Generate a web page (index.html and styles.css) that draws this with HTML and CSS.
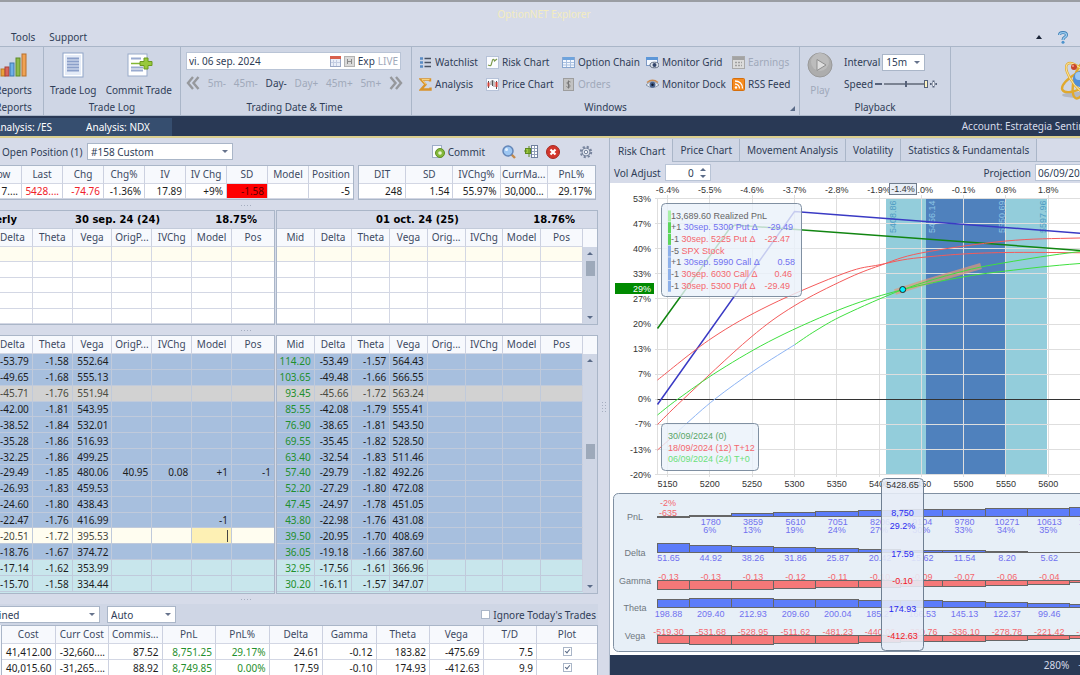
FILE: index.html
```html
<!DOCTYPE html>
<html lang="en">
<head>
    <meta charset="UTF-8">
    <meta name="viewport" content="width=device-width, initial-scale=1.0">
    <title>OptionNET Explorer</title>
    <link rel="stylesheet" href="styles.css">
</head>
<body>
    <header class="titlebar">
        <h1 class="app-title">OptionNET Explorer</h1>
        <nav class="menu">
            <a href="#tools">Tools</a>
            <a href="#support">Support</a>
            <span class="menu-right">
                <button type="button" class="icon-btn" aria-label="Collapse ribbon"><svg width="6" height="4"><path d="M0 4L3 0L6 4Z" fill="#1b2438"/></svg></button>
                <button type="button" class="icon-btn" aria-label="Help"><svg width="10" height="13" viewBox="0 0 10 13"><path d="M1.5 4C1.5 .8 8.5 .8 8.5 4C8.5 6.400 5 5.800 5 9" fill="none" stroke="#3f7fb5" stroke-width="3"/><path d="M1.500 4C1.500 .8 8.500 .8 8.500 4C8.500 6.400 5 5.800 5 9" fill="none" stroke="#9ccdf0" stroke-width="1.400"/><circle cx="5" cy="11.300" r="1.500" fill="#4d93cc"/></svg></button>
            </span>
        </nav>
    </header>

    <section class="ribbon">
        <div class="group group-reports">
            <div class="group-body">
                <button type="button" class="big-btn">
                    <svg width="28" height="28" viewBox="0 0 28 28"><rect x="1" y="18" width="4" height="7" fill="#e9a13b" stroke="#b87a20"/><rect x="5" y="16" width="4" height="9" fill="#d9655c" stroke="#a8433c"/><rect x="10" y="12" width="4" height="13" fill="#6fb0e6" stroke="#3f78ae"/><rect x="16" y="7" width="4" height="18" fill="#8dbb4a" stroke="#5e8a28"/><rect x="22" y="3" width="4" height="22" fill="#f0a254" stroke="#b9702a"/></svg>
                    Reports
                </button>
            </div>
            <div class="group-name">Reports</div>
        </div>

        <div class="group group-log">
            <div class="group-body">
                <button type="button" class="big-btn">
                    <svg width="28" height="28" viewBox="0 0 28 28"><rect x="4" y="2" width="20" height="24" fill="#fff" stroke="#8fa4c8"/><rect x="6" y="4" width="16" height="20" fill="#e4ebf7"/><path d="M8 7.500H20M8 10.500H20M8 13.500H20M8 16.500H20M8 19.500H20" stroke="#8b9fc9" stroke-width="2"/></svg>
                    Trade Log
                </button>
                <button type="button" class="big-btn">
                    <svg width="28" height="28" viewBox="0 0 28 28"><rect x="3" y="3" width="19" height="22" fill="#fff" stroke="#9aabca"/><path d="M6 7.500H16M6 16.500H18M6 19.500H18" stroke="#9aabd0" stroke-width="2"/><path d="M6 12.500H16" stroke="#83b735" stroke-width="1.500"/><path d="M19 7H23V10.500H27V14.500H23V18H19V14.500H15V10.500H19Z" fill="#98c93c" stroke="#6c9a20"/></svg>
                    Commit Trade
                </button>
            </div>
            <div class="group-name">Trade Log</div>
        </div>

        <div class="group group-date">
            <div class="group-body date-body">
                <div class="date-box">
                    <input type="text" aria-label="Trading date" value="vi. 06 sep. 2024">
                    <button type="button" class="icon-btn" aria-label="Calendar"><svg width="11" height="11"><rect x=".5" y=".5" width="10" height="10" fill="#e9eef8" stroke="#9aa8c6"/><rect width="11" height="3" fill="#d8604c"/><path d="M3.500 4V10M6.500 4V10M1 6.500H10" stroke="#c3cde2"/></svg></button>
                    <button type="button" class="icon-btn" aria-label="Step"><svg width="11" height="11"><rect x=".5" y=".5" width="10" height="10" fill="#d9d9d9" stroke="#b3b3b3"/><path d="M3.500 3V8M7.500 3V8M3.500 5.500H7.500" stroke="#8a8a8a"/></svg></button>
                    <button type="button" class="icon-btn">Exp</button>
                    <button type="button" class="icon-btn" disabled>LIVE</button>
                </div>
                <div class="steps">
                    <button type="button" class="icon-btn" aria-label="Back"><svg width="14" height="14"><path d="M7 1L2 7L7 13M12.500 1L7.500 7L12.500 13" fill="none" stroke="#96989c" stroke-width="2.400"/></svg></button>
                    <button type="button" class="icon-btn" disabled>5m-</button>
                    <button type="button" class="icon-btn" disabled>45m-</button>
                    <button type="button" class="icon-btn">Day-</button>
                    <button type="button" class="icon-btn" disabled>Day+</button>
                    <button type="button" class="icon-btn" disabled>45m+</button>
                    <button type="button" class="icon-btn" disabled>5m+</button>
                    <button type="button" class="icon-btn" aria-label="Forward"><svg width="14" height="14"><path d="M1.500 1L6.500 7L1.500 13M7 1L12 7L7 13" fill="none" stroke="#96989c" stroke-width="2.400"/></svg></button>
                </div>
            </div>
            <div class="group-name">Trading Date &amp; Time</div>
        </div>

        <div class="group group-windows">
            <div class="group-body windows">
                <button type="button" class="tool"><svg width="13" height="13"><path d="M1 2.500H4M1 6.500H4M1 10.500H4" stroke="#5b8cc4" stroke-width="2.400"/><path d="M5.500 2.500H12M5.500 6.500H12M5.500 10.500H12" stroke="#4a5364" stroke-width="1.300"/></svg>Watchlist</button>
                <button type="button" class="tool"><svg width="13" height="13"><rect x=".5" y=".5" width="12" height="12" fill="#fbfcff" stroke="#b6c2d8"/><path d="M2 9C6 11 5 8 6 6C6.500 2.500 8 3 8.500 5L11 3" fill="none" stroke="#7c9a4c" stroke-width="1.200"/></svg>Risk Chart</button>
                <button type="button" class="tool"><svg width="13" height="13"><rect x=".5" y="1.500" width="12" height="10" fill="#f4f8ff" stroke="#89a7d0"/><rect x="1" y="1" width="11" height="3" fill="#6fa4dd"/><path d="M4.500 4V11M8.500 4V11M1 6.500H12M1 9H12" stroke="#a9c0e0"/></svg>Option Chain</button>
                <button type="button" class="tool"><svg width="13" height="13"><rect x=".5" y="1.500" width="11" height="8" fill="#f4f8ff" stroke="#7d99c4"/><rect x="0" y="1" width="12" height="3" fill="#5d97d8"/><ellipse cx="8.500" cy="9" rx="4.500" ry="2.800" fill="#dfe5ee" stroke="#5f6b80"/><circle cx="8.500" cy="9" r="2" fill="#34466b"/></svg>Monitor Grid</button>
                <button type="button" class="tool" disabled><svg width="13" height="13"><rect x=".5" y=".5" width="12" height="12" fill="#dcdcdc" stroke="#a9a9a9"/><rect x="1" y="1" width="11" height="3" fill="#a3a3a3"/><path d="M3 6.500H10M3 9.500H10" stroke="#a0a0a0" stroke-width="1.500" stroke-dasharray="2 1"/></svg>Earnings</button>
                <button type="button" class="tool"><svg width="13" height="13"><path d="M11 3.500V1.500H2L6.500 6.500L2 11.500H11.500V9.500" fill="none" stroke="#d9932b" stroke-width="2.400"/><path d="M10.500 1.500H3L7 6.500" fill="none" stroke="#f7d17a" stroke-width="1"/></svg>Analysis</button>
                <button type="button" class="tool"><svg width="13" height="13"><rect x=".5" y=".5" width="12" height="12" fill="#fbfcff" stroke="#b6c2d8"/><path d="M2.500 3V10M6.500 2V8M10.500 3V11" stroke="#555"/><path d="M2.500 4.500V8.500M10.500 4V9" stroke="#d13c34" stroke-width="2"/><path d="M5 7V4C5 2 8 2 8 4V9" fill="none" stroke="#888"/></svg>Price Chart</button>
                <button type="button" class="tool" disabled><svg width="13" height="13"><rect x="1.500" y=".5" width="10" height="12" fill="#c2c2c2" stroke="#9d9d9d"/><path d="M8.500 4C6 2.500 4.500 4.500 5.500 6C6.500 6.800 8.500 6.500 8 8.500C7 10 5.500 9.500 4.500 8.500M6.500 2.500V10.500" fill="none" stroke="#777"/></svg>Orders</button>
                <button type="button" class="tool"><svg width="13" height="13"><path d="M0 7Q6.500 0 13 7Q6.500 12 0 7Z" fill="#edf1f7" stroke="#8a97ab"/><path d="M1 4.500Q6.500 0 12 4.500" fill="none" stroke="#c98b52" stroke-width="1.500"/><circle cx="6.500" cy="6.800" r="3" fill="#4a6490"/><circle cx="6.500" cy="6.800" r="1.200" fill="#10182b"/></svg>Monitor Dock</button>
                <button type="button" class="tool"><svg width="13" height="13"><rect x=".5" y=".5" width="12" height="12" rx="1" fill="#f58a1f" stroke="#d56f0c"/><circle cx="4" cy="9.500" r="1.200" fill="#fff"/><path d="M3 6C5.500 6 7.500 8 7.500 10.500M3 3C7.500 3 10.500 6 10.500 10.500" fill="none" stroke="#fff" stroke-width="1.300"/></svg>RSS Feed</button>
            </div>
            <div class="group-name">Windows</div>
            <svg class="launcher" width="5" height="5"><path d="M5 0V5H0Z" fill="#5a6b88"/></svg>
        </div>

        <div class="group group-playback">
            <div class="group-body playback">
                <button type="button" class="big-btn" disabled>
                    <svg width="28" height="28" viewBox="0 0 28 28"><circle cx="14" cy="14" r="12" fill="#adadad" stroke="#999"/><circle cx="14" cy="11" r="9" fill="#bcbcbc"/><path d="M11 8.500L20 14L11 19.500Z" fill="#dedede" stroke="#8f8f8f"/></svg>
                    Play
                </button>
                <div class="play-options">
                    <div class="play-row">
                        <label for="interval">Interval</label>
                        <span class="select select-interval"><select id="interval"><option>15m</option></select></span>
                    </div>
                    <div class="play-row">
                        <label for="speed">Speed</label>
                        <svg width="7" height="8"><path d="M0 4H7" stroke="#56627a" stroke-width="2"/></svg>
                        <input type="range" id="speed" min="0" max="10" value="10">
                        <svg width="7" height="8"><path d="M3.500 .5V7.500M0 4H7" stroke="#56627a" stroke-width="2"/><path d="M3.500 2V6M1.500 4H5.500" stroke="#eef1f7"/></svg>
                    </div>
                </div>
            </div>
            <div class="group-name">Playback</div>
        </div>

        <svg class="logo" width="46" height="46" viewBox="0 0 46 46">
            <ellipse cx="20" cy="38" rx="17" ry="3" fill="#b3b8c4"/>
            <g fill="none" stroke="#e0a92e" stroke-width="2.400">
                <ellipse cx="22" cy="23" rx="21" ry="8" transform="rotate(-28 22 23)"/>
                <ellipse cx="22" cy="23" rx="21" ry="8" transform="rotate(50 22 23)"/>
                <ellipse cx="22" cy="23" rx="19" ry="7" transform="rotate(105 22 23)"/>
            </g>
            <ellipse cx="22" cy="23" rx="21" ry="8" transform="rotate(50 22 23)" fill="none" stroke="#fbe49a"/>
            <circle cx="22" cy="22" r="8" fill="#4f8fd9"/>
            <circle cx="20" cy="19" r="4" fill="#9cc8f5"/>
            <circle cx="15" cy="10" r="3" fill="#c9442b"/>
            <circle cx="14" cy="9" r="1" fill="#f0a08c"/>
        </svg>
    </section>

    <div class="docbar">
        <nav class="doc-tabs">
            <a href="#es">Analysis: /ES</a>
            <a href="#ndx">Analysis: NDX</a>
        </nav>
        <span class="account">Account: Estrategia Sentiment</span>
    </div>

    <main class="workspace">
        <section class="left">
            <div class="position-bar">
                <label for="position">Open Position (1)</label>
                <span class="select select-position"><select id="position"><option>#158 Custom</option></select></span>
                <div class="position-tools">
                    <button type="button" class="tool"><svg width="13" height="13"><rect x=".5" y=".5" width="9" height="12" fill="#fbfcff" stroke="#9fadc8"/><circle cx="8" cy="8" r="4.500" fill="#84b83c" stroke="#5f8f22"/><circle cx="8" cy="8" r="1.800" fill="#e8f4d2"/></svg>Commit</button>
                    <button type="button" class="icon-btn" aria-label="Search"><svg width="14" height="14"><path d="M8.500 8.500L13 13" stroke="#c48a4a" stroke-width="2.400"/><circle cx="6" cy="6" r="5" fill="#9cc6f2" stroke="#6486b8" stroke-width="1.500"/><circle cx="4.500" cy="4.500" r="1.500" fill="#e4f1ff"/></svg></button>
                    <button type="button" class="icon-btn" aria-label="Columns"><svg width="14" height="14"><rect x="7.500" y=".5" width="6" height="12" fill="#fff" stroke="#6f7f9e"/><path d="M8 3.500H13M8 6.500H13M8 9.500H13M10.500 1V12" stroke="#93a1bb"/><rect x="1.500" y="3.500" width="5" height="5" fill="#9cc83e" stroke="#5f8a20"/><path d="M0 6H3M5 1V12" stroke="#5f8a20"/></svg></button>
                    <button type="button" class="icon-btn" aria-label="Close position"><svg width="14" height="14"><circle cx="7" cy="7" r="6.500" fill="#d2362c" stroke="#a82a22"/><path d="M4.500 4.500L9.500 9.500M9.500 4.500L4.500 9.500" stroke="#fff" stroke-width="2.200"/></svg></button>
                    <button type="button" class="icon-btn gear" aria-label="Settings"><svg width="14" height="14"><circle cx="7" cy="7" r="5.200" fill="none" stroke="#77849d" stroke-width="2" stroke-dasharray="2.100 2"/><circle cx="7" cy="7" r="4" fill="#dde2ec" stroke="#77849d"/><circle cx="7" cy="7" r="1.700" fill="#f4f6fa" stroke="#77849d"/></svg></button>
                </div>
            </div>

            <div class="quotes">
                <table class="grid quote-under">
                    <thead><tr><th>Low</th><th>Last</th><th>Chg</th><th>Chg%</th><th>IV</th><th>IV Chg</th><th>SD</th><th>Model</th><th class="wide">Position</th></tr></thead>
                    <tbody><tr><td>5417....</td><td class="red">5428....</td><td class="red">-74.76</td><td>-1.36%</td><td>17.89</td><td>+9%</td><td class="alert">-1.58</td><td></td><td>-5</td></tr></tbody>
                </table>
                <table class="grid quote-pos">
                    <thead><tr><th>DIT</th><th>SD</th><th>IVChg%</th><th>CurrMa...</th><th>PnL%</th></tr></thead>
                    <tbody><tr><td>248</td><td>1.54</td><td>55.97%</td><td>30,000...</td><td>29.17%</td></tr></tbody>
                </table>
            </div>
            <div class="grip"></div>

            <div class="chain chain-calls">
                <div class="pane">
                    <div class="expiry near-title"><b>Quarterly</b><b>30 sep. 24 (24)</b><b>18.75%</b></div>
                    <div class="pane-body"><table class="grid near" id="callsNear"></table></div>
                </div>
                <div class="pane">
                    <div class="expiry far-title"><b>01 oct. 24 (25)</b><b>18.76%</b></div>
                    <div class="pane-body">
                        <table class="grid far" id="callsFar"></table>
                        <div class="scroll"><i class="up"></i><i class="thumb"></i><i class="down"></i></div>
                    </div>
                </div>
            </div>
            <div class="grip"></div>

            <div class="chain chain-puts">
                <div class="pane">
                    <div class="pane-body"><table class="grid near" id="putsNear"></table></div>
                </div>
                <div class="pane">
                    <div class="pane-body">
                        <table class="grid far" id="putsFar"></table>
                        <div class="scroll"><i class="up"></i><i class="thumb"></i><i class="down"></i></div>
                    </div>
                </div>
            </div>
            <div class="grip"></div>

            <div class="summary-bar">
                <span class="select select-view"><select aria-label="View"><option>Combined</option></select></span>
                <span class="select select-auto"><select aria-label="Mode"><option>Auto</option></select></span>
                <label class="ignore"><input type="checkbox">Ignore Today's Trades</label>
            </div>
            <div class="summary-wrap">
                <table class="grid summary">
                    <thead><tr><th>Cost</th><th>Curr Cost</th><th>Commis...</th><th>PnL</th><th>PnL%</th><th>Delta</th><th>Gamma</th><th>Theta</th><th>Vega</th><th>T/D</th><th class="plot">Plot</th></tr></thead>
                    <tbody>
                        <tr><td>41,412.00</td><td>-32,660....</td><td>87.52</td><td class="green">8,751.25</td><td class="green">29.17%</td><td>24.61</td><td>-0.12</td><td>183.82</td><td>-475.69</td><td>7.5</td><td class="tick"><input type="checkbox" aria-label="Plot row 1" checked></td></tr>
                        <tr><td>40,015.60</td><td>-31,265....</td><td>88.92</td><td class="green">8,749.85</td><td class="green">0.00%</td><td>17.59</td><td>-0.10</td><td>174.93</td><td>-412.63</td><td>9.9</td><td class="tick"><input type="checkbox" aria-label="Plot row 2" checked></td></tr>
                    </tbody>
                </table>
            </div>
            <div class="grip grip-side"></div>
        </section>

        <section class="right">
            <nav class="tabs">
                <button type="button" class="tab active">Risk Chart</button>
                <button type="button" class="tab">Price Chart</button>
                <button type="button" class="tab">Movement Analysis</button>
                <button type="button" class="tab">Volatility</button>
                <button type="button" class="tab">Statistics &amp; Fundamentals</button>
            </nav>
            <div class="chart-bar">
                <label for="vol">Vol Adjust</label>
                <span class="spin"><input type="text" id="vol" value="0"><i class="up"></i><i class="down"></i></span>
                <label for="projection" class="projection-label">Projection</label>
                <input type="text" id="projection" class="projection" value="06/09/2024">
            </div>
            <div class="chart-area"><svg id="chart" class="chart" role="img" aria-label="Risk chart"></svg></div>
            <footer class="status"><span>280%</span><span>−</span></footer>
        </section>
    </main>

    <script>
        // ---- option chain tables ----
        const nearHeads = ['Delta', 'Theta', 'Vega', 'OrigP...', 'IVChg', 'Model', 'Pos'];
        const farHeads = ['Mid', 'Delta', 'Theta', 'Vega', 'Orig...', 'IVChg', 'Model', 'Pos'];

        const near = [
            ['-53.79', '-1.58', '552.64'], ['-49.65', '-1.68', '555.13'], ['-45.71', '-1.76', '551.94'],
            ['-42.00', '-1.81', '543.95'], ['-38.52', '-1.84', '532.01'], ['-35.28', '-1.86', '516.93'],
            ['-32.25', '-1.86', '499.25'], ['-29.49', '-1.85', '480.06', '40.95', '0.08', '+1', '-1'],
            ['-26.93', '-1.83', '459.53'], ['-24.60', '-1.80', '438.43'], ['-22.47', '-1.76', '416.99', '', '', '-1'],
            ['-20.51', '-1.72', '395.53'], ['-18.76', '-1.67', '374.72'], ['-17.14', '-1.62', '353.99'],
            ['-15.70', '-1.58', '334.44']
        ];
        const far = [
            ['114.20', '-53.49', '-1.57', '564.43'], ['103.65', '-49.48', '-1.66', '566.55'], ['93.45', '-45.66', '-1.72', '563.24'],
            ['85.55', '-42.08', '-1.79', '555.41'], ['76.90', '-38.65', '-1.81', '543.50'], ['69.55', '-35.45', '-1.82', '528.50'],
            ['63.40', '-32.54', '-1.83', '511.46'], ['57.40', '-29.79', '-1.82', '492.26'], ['52.20', '-27.29', '-1.80', '472.08'],
            ['47.45', '-24.97', '-1.78', '451.05'], ['43.80', '-22.98', '-1.76', '431.08'], ['39.50', '-20.95', '-1.70', '408.69'],
            ['36.05', '-19.18', '-1.66', '387.60'], ['32.95', '-17.56', '-1.61', '366.96'], ['30.20', '-16.11', '-1.57', '347.07']
        ];

        function fillTable(id, heads, rows, rowClass) {
            const head = heads.map(h => `<th>${h}</th>`).join('');
            const body = rows.map((row, r) => {
                const cells = heads.map((h, c) => `<td>${row[c] || ''}</td>`).join('');
                return `<tr class="${rowClass(r)}">${cells}</tr>`;
            }).join('');
            document.getElementById(id).innerHTML = `<thead><tr>${head}</tr></thead><tbody>${body}</tbody>`;
        }

        function putClass(editRow) {
            return r => {
                if (r === 2) return 'muted';
                if (r === editRow) return 'edit';
                return r > 12 ? 'outer' : 'inner';
            };
        }

        const blank = [[], [], [], [], []];
        const callClass = r => r === 0 ? 'first' : '';
        fillTable('callsNear', nearHeads, blank, callClass);
        fillTable('callsFar', farHeads, blank, callClass);
        fillTable('putsNear', nearHeads, near, putClass(11));
        fillTable('putsFar', farHeads, far, putClass(-1));

        // ---- risk chart ----
        const STEP = 42.3;
        const X0 = 57.5;          // x of the 5150 grid line
        const LEFT = 47.5;
        const TOP = 15.5;
        const ROW = 25.1;
        const RIGHT = 560;
        const out = [];

        function line(x1, y1, x2, y2, cls) {
            out.push(`<line x1="${x1}" y1="${y1}" x2="${x2}" y2="${y2}" class="${cls}"/>`);
        }
        function rect(x, y, w, h, cls, rx = 0) {
            out.push(`<rect x="${x}" y="${y}" width="${w}" height="${h}" rx="${rx}" class="${cls}"/>`);
        }
        function text(x, y, str, cls) {
            out.push(`<text x="${x}" y="${y + 3}" class="${cls}">${str}</text>`);
        }
        // smooth curve through a list of points
        function curve(pts, cls) {
            let d = `M${pts[0]}`;
            for (let i = 0; i < pts.length - 1; i++) {
                const a = pts[i - 1] || pts[i], b = pts[i], c = pts[i + 1], e = pts[i + 2] || c;
                d += `C${b[0] + (c[0] - a[0]) / 6},${b[1] + (c[1] - a[1]) / 6} ${c[0] - (e[0] - b[0]) / 6},${c[1] - (e[1] - b[1]) / 6} ${c}`;
            }
            out.push(`<path d="${d}" class="curve ${cls}"/>`);
        }

        // deviation bands
        rect(276, 15, 40, 276, 'band-outer');
        rect(316, 15, 80, 276, 'band-inner');
        rect(396, 15, 41, 276, 'band-outer');

        // grid and axis labels
        const moves = ['-6.4%', '-5.5%', '-4.6%', '-3.7%', '-2.8%', '-1.9%', '-1.0%', '-0.1%', '0.8%', '1.8%'];
        moves.forEach((m, i) => {
            const x = X0 + i * STEP;
            line(x, 12, x, 294, 'grid-line');
            text(x, 7, m, 'axis mid');
            text(x, 301, 5150 + i * 50, 'axis mid');
        });
        ['53%', '47%', '40%', '33%', '27%', '20%', '13%', '7%', '0%', '-7%', '-13%', '-20%'].forEach((p, i) => {
            const y = TOP + i * ROW;
            line(45, y, RIGHT, y, 'grid-line');
            text(41, y, p, 'axis end');
        });
        line(LEFT, TOP, LEFT, 291, 'grid-line');
        line(LEFT, 216.5, RIGHT, 216.5, 'zero');

        [[286, '5408.86', 'on-outer'], [325, '5456.14', 'on-inner'], [395, '5550.69', 'on-inner'], [436, '5597.96', 'on-outer']].forEach(b => {
            out.push(`<text transform="translate(${b[0]} 50) rotate(-90)" class="${b[2]}">${b[1]}</text>`);
        });

        // expected path, then the payoff lines
        out.push('<path d="M285 109L316 99L371 83" class="expected"/>');
        out.push('<path d="M47.5 221.500L184.500 28.500L230 32L560 57" class="curve navy"/>');
        out.push('<path d="M47.500 145.500L120 45L125 42L560 74" class="curve forest"/>');
        curve([[47.5, 197], [102, 155], [160, 122], [235, 90], [270, 81.7], [311, 74.5], [396, 69.5], [560, 71]], 'red');
        curve([[47.5, 241.5], [73, 216.5], [140, 155], [184, 123], [235, 96.5], [270, 82.5], [311, 70], [396, 58], [470, 55], [560, 54]], 'red');
        curve([[47.5, 232], [68, 216], [110, 187], [166, 155], [235, 124.5], [293, 106.5], [350, 94.5], [396, 88], [470, 80.5], [560, 76]], 'lime');
        curve([[47.5, 267], [60, 256]], 'red');
        curve([[60, 256], [76, 241], [105, 216], [145, 187], [185, 161.5]], 'sky');
        curve([[185, 161.5], [206, 147.5], [235, 131.5], [293, 106.5], [350, 89], [396, 79.5], [470, 68.5], [560, 60]], 'lime');
        out.push('<circle cx="292.700" cy="106.500" r="3" class="marker"/>');

        rect(279.5, .5, 27, 11, 'move-box');
        text(293, 6, '-1.4%', 'axis mid');
        rect(5, 100, 39, 11, 'level-box');
        text(41, 106, '29%', 'level end');

        // position legend
        rect(51.5, 20.5, 140, 93, 'panel', 4);
        [
            ['p1', '13,689.60 Realized PnL', '', '', '', 0],
            ['p2', '+1', '30sep. 5300 Put Δ', '-29.49', 'blue', 183],
            ['p2', '-1', '30sep. 5225 Put Δ', '-22.47', 'pink', 180],
            ['p3', '-5', 'SPX Stock', '', 'pink', 180],
            ['p3', '+1', '30sep. 5990 Call Δ', '0.58', 'blue', 185],
            ['p3', '-1', '30sep. 6030 Call Δ', '0.46', 'pink', 182],
            ['p3', '-1', '30sep. 5300 Put Δ', '-29.49', 'pink', 180]
        ].forEach((l, i) => {
            const y = 32.5 + i * 11.7;
            rect(58, y - 5, 3, 11, l[0]);
            out.push(`<text x="61" y="${y + 3}" class="grey">${l[1]} <tspan class="${l[4]}">${l[2]}</tspan></text>`);
            if (l[3]) text(l[5], y, l[3], l[4] + ' end');
        });

        // date legend
        rect(51.5, 240.5, 97, 47, 'panel', 4);
        text(58, 253, '30/09/2024 (0)', 'leg-forest');
        text(58, 264.5, '18/09/2024 (12) T+12', 'pink');
        text(58, 276, '06/09/2024 (24) T+0', 'leg-lime');

        // greeks strip
        rect(3.5, 310.5, 600, 158, 'greeks', 5);
        const strips = [
            { name: 'PnL', base: 333.5, labelY: 338.5, cls: 'blue', bar: 'bar-blue', h: [-0.5, 1, 3, 4, 5, 6, 7, 7, 8, 8, 9],
              vals: ['', '1780', '3859', '5610', '7051', '8206', '9104', '9780', '10271', '10613', '10845'] },
            { name: 'Delta', base: 369.5, labelY: 375, cls: 'blue', bar: 'bar-blue', h: [9, 7, 6, 5, 4, 3, 2, 2, 1, .5, .5],
              vals: ['51.65', '44.92', '38.26', '31.86', '25.87', '20.42', '15.62', '11.54', '8.20', '5.62', '3.71'] },
            { name: 'Gamma', base: 397.5, labelY: 393.5, cls: 'pink', bar: 'bar-red', h: [-9, -9, -9, -8, -7, -7, -6, -6, -5, -4, -2],
              vals: ['-0.13', '-0.13', '-0.13', '-0.12', '-0.11', '-0.10', '-0.09', '-0.07', '-0.06', '-0.04', '-0.03'] },
            { name: 'Theta', base: 424.5, labelY: 430.5, cls: 'blue', bar: 'bar-blue', h: [8, 9, 9, 8, 8, 7, 7, 6, 5, 4, 3],
              vals: ['198.88', '209.40', '212.93', '209.60', '200.04', '185.27', '166.53', '145.13', '122.37', '99.46', '77.60'] },
            { name: 'Vega', base: 452.5, labelY: 449, cls: 'pink', bar: 'bar-red', h: [-8, -9, -9, -8, -8, -7, -6, -6, -5, -4, -3],
              vals: ['-519.30', '-531.68', '-528.95', '-511.62', '-481.23', '-440.06', '-390.76', '-336.10', '-278.78', '-221.42', '-168.10'] }
        ];
        strips.forEach(s => {
            text(25, s.base + .5, s.name, 'strip-name mid');
            s.h.forEach((h, i) => {
                const x = i ? 79 + (i - 1) * STEP : LEFT;
                const w = i ? STEP : 31.5;
                rect(x, h > 0 ? s.base - h : s.base, w, Math.abs(h), s.bar);
                text(58.5 + i * STEP, s.labelY, s.vals[i], s.cls + ' mid');
            });
        });
        ['6%', '13%', '19%', '24%', '27%', '30%', '33%', '34%', '35%', '36%'].forEach((p, i) => {
            text(X0 + (i + 1) * STEP, 347, p, 'blue mid');
        });
        text(58, 320, '-2%', 'pink mid');
        text(58, 330, '-635', 'pink mid');

        // values at the current price
        rect(271.5, 295.5, 42, 172, 'cursor', 4);
        text(292.5, 302, '5428.65', 'axis mid');
        [[330, '8,750'], [343, '29.2%'], [370.5, '17.59'], [398, '-0.10'], [425.5, '174.93'], [453, '-412.63']].forEach(v => {
            text(292.5, v[0], v[1], (v[1][0] === '-' ? 'now-red' : 'now-blue') + ' mid');
        });

        document.getElementById('chart').innerHTML = out.join('');
    </script>
</body>
</html>
```

FILE: styles.css
```css
* {
    margin: 0;
    padding: 0;
    box-sizing: border-box;
}

body {
    display: flex;
    flex-direction: column;
    height: 100vh;
    overflow: hidden;
    background-color: #d6dbe9;
    color: #2f3d57;
    font-family: "Noto Sans", "Open Sans", sans-serif;
    font-size: 10px;
    line-height: 14px;
    white-space: nowrap;
}

button, input, select {
    font: inherit;
    color: inherit;
    border: none;
    background: none;
}

a {
    color: inherit;
    text-decoration: none;
}

svg {
    display: block;
    flex: none;
}

button:disabled {
    color: #a0a9ba;
}

.icon-btn {
    display: flex;
    align-items: center;
}

/* title bar and menu */
.titlebar {
    border-top: 2px solid #9a9da3;
    padding-top: 5px;
}

.app-title {
    padding-left: 8px;
    text-align: center;
    font-size: 10px;
    font-weight: normal;
    line-height: 14px;
    color: #f3ecc0;
}

.menu {
    display: flex;
    gap: 14px;
    padding: 9px 12px 2px 11px;
}

.menu-right {
    display: flex;
    gap: 16px;
    margin-left: auto;
}

/* ribbon */
.ribbon {
    display: flex;
    height: 70px;
    flex: none;
    background-color: #cfd6e5;
    border-top: 1px solid #aab6c8;
    border-bottom: 1px solid #aab6c8;
}

.group {
    position: relative;
    display: flex;
    flex-direction: column;
    padding-top: 4px;
    border-right: 1px solid #aab6c8;
}

.group-body {
    display: flex;
    flex: 1;
}

.group-name {
    text-align: center;
    padding-bottom: 1px;
}

.group-reports {
    width: 60px;
    margin-left: -16px;
}

.group-reports .group-body {
    justify-content: center;
}

.group-log {
    width: 137px;
}

.group-log .group-body {
    justify-content: space-between;
    padding: 0 8px 0 6px;
}

.big-btn {
    display: flex;
    flex-direction: column;
    align-items: center;
    gap: 4px;
}

.group-date {
    width: 231px;
    padding-left: 5px;
    padding-right: 8px;
}

.date-body {
    flex-direction: column;
    gap: 6px;
    padding-top: 1px;
}

.date-box {
    display: flex;
    align-items: center;
    gap: 3px;
    height: 18px;
    margin-right: 2px;
    padding: 0 2px;
    background-color: #fff;
    border: 1px solid #b9c4d6;
}

.date-box input {
    flex: 1;
    min-width: 0;
}

.steps {
    display: flex;
    justify-content: space-between;
    align-items: center;
}

.windows {
    display: grid;
    grid-template-columns: 67px 76px 84px 86px 65px;
    grid-template-rows: 22px 22px;
    padding-left: 7px;
}

.group-windows {
    width: 388px;
}

.tool {
    display: flex;
    align-items: center;
    gap: 3px;
}

.launcher {
    position: absolute;
    right: 4px;
    bottom: 4px;
}

.group-playback {
    width: 151px;
}

.playback {
    gap: 10px;
    padding-left: 6px;
}

.play-row {
    display: flex;
    align-items: center;
    gap: 2px;
    height: 22px;
}

.play-row label {
    min-width: 29px;
}

.play-row input[type="range"] {
    appearance: none;
    width: 44px;
    height: 8px;
    background:
        linear-gradient(#56627a, #56627a) center / 2px 6px no-repeat,
        linear-gradient(#7b8392, #7b8392) center / 100% 2px no-repeat;
}

.play-row input[type="range"]::-webkit-slider-thumb {
    appearance: none;
    width: 4px;
    height: 8px;
    background-color: #fdf3c0;
    border: 1px solid #56627a;
}

.logo {
    margin: 10px -25px 0 auto;
}

/* drop-downs */
.select {
    position: relative;
    display: flex;
    align-items: center;
    height: 17px;
    background-color: #fff;
    border: 1px solid #aab6c8;
}

.select select {
    appearance: none;
    width: 100%;
    padding-left: 3px;
}

.select::after {
    content: "";
    position: absolute;
    right: 4px;
    border: 3px solid transparent;
    border-top-color: #66738c;
    border-bottom: none;
}

.select-interval {
    width: 43px;
}

.select-position {
    width: 146px;
}

.select-view {
    width: 131px;
    margin-left: -31px;
}

.select-view select {
    padding-left: 1px;
}

.select-auto {
    width: 69px;
}

/* document tabs */
.docbar {
    display: flex;
    justify-content: space-between;
    height: 22px;
    flex: none;
    background-color: #293955;
    border-bottom: 2px solid #dccf8e;
    color: #d6dbe9;
}

.doc-tabs {
    display: flex;
    gap: 34px;
    width: 172px;
    margin-top: 2px;
    background-color: #364e6f;
    line-height: 18px;
    color: #fff;
}

.doc-tabs a:first-child {
    margin-left: -6px;
}

.account {
    margin-right: -23px;
    line-height: 20px;
}

/* workspace */
.workspace {
    display: grid;
    grid-template-columns: 609fr 471fr;
    flex: 1;
    min-height: 0;
}

.left {
    position: relative;
    min-width: 0;
    padding-right: 11px;
    overflow: hidden;
}

.position-bar {
    display: flex;
    align-items: center;
    gap: 7px;
    height: 27px;
    padding: 0 5px 0 2px;
}

.position-bar > label {
    width: 78px;
}

.position-tools {
    display: flex;
    gap: 8px;
    margin-left: auto;
}

.position-tools .tool {
    margin-right: 9px;
}

.gear {
    margin-left: 11px;
}

/* data grids */
.grid {
    width: 100%;
    table-layout: fixed;
    border-collapse: separate;
    border-spacing: 0;
    color: #1c1c1c;
}

.grid th,
.grid td {
    overflow: hidden;
    border-right: 1px solid #ccd1e0;
    border-bottom: 1px solid #d3d7e4;
    line-height: 12px;
}

.grid th {
    height: 18px;
    padding-bottom: 2px;
    background-color: #f7f9fd;
    font-weight: normal;
    text-align: center;
    color: #3d4a63;
}

.grid td {
    padding-right: 3px;
    background-color: #fff;
    text-align: right;
}

.grid th:last-child,
.grid td:last-child {
    border-right: none;
}

.chain .grid th:last-child {
    width: 42px;
}

.grid .red {
    color: #f0202a;
}

.grid .green {
    color: #1f8f2d;
}

.grid .alert {
    background-color: #f00;
    color: #5e0000;
}

.quotes {
    display: grid;
    grid-template-columns: 374fr 238fr;
    gap: 4px;
    height: 35px;
    margin-left: -20px;
    padding-right: 2px;
}

.quote-under,
.quote-pos {
    height: 35px;
    border: 1px solid #aab6c8;
}

.grid .wide {
    width: 44px;
}

.grip {
    height: 10px;
    background: radial-gradient(circle, #a5aec0 1px, transparent 1px) 240px 4px / 3px 3px no-repeat;
    background-repeat: repeat;
    background-clip: content-box;
    padding: 3px 345px 3px 240px;
}

.grip-side {
    position: absolute;
    right: 2px;
    top: 262px;
    width: 6px;
    height: 14px;
    padding: 1px;
}

.chain {
    display: grid;
    grid-template-columns: 283fr 322fr;
    gap: 1px;
    margin-left: -8px;
}

.pane {
    display: flex;
    flex-direction: column;
    min-width: 0;
    border: 1px solid #aab6c8;
}

.chain-calls .pane {
    height: 115px;
}

.chain-puts .pane {
    height: 259px;
    background-color: #c8e6ec;
}

.pane-body {
    display: flex;
    flex: 1;
}

.chain-calls .grid {
    height: 95px;
}

.chain-puts .grid {
    height: 256px;
}

.chain .grid td {
    border-color: #c0cadb;
}

.expiry {
    display: grid;
    height: 18px;
    background-color: #d6dbe9;
    border-bottom: 1px solid #c3cbda;
    font-family: "DejaVu Sans", Verdana, sans-serif;
    line-height: 18px;
    color: #000;
}

.near-title {
    grid-template-columns: 17px 1fr 1fr;
    padding-left: 7px;
}

.near-title b:first-child {
    justify-self: end;
}

.near-title b:nth-child(2) {
    padding-left: 58px;
}

.expiry b:last-child {
    padding-right: 17px;
    text-align: right;
}

.far-title {
    grid-template-columns: 1fr 1fr;
    padding-left: 99px;
}

.far-title b:last-child {
    padding-right: 22px;
}

.chain-calls .grid td {
    border-color: #d3d7e4;
}

.grid .first td {
    background-color: #fffdf0;
}

.grid .inner td {
    background-color: #a7bfde;
}

.grid .outer td {
    background-color: #c8e6ec;
}

.grid .muted td {
    background-color: #d2d2d2;
    color: #4a4a40;
}

.grid .edit td {
    background-color: #fffdf0;
    color: #4a4a40;
}

.grid .edit td:nth-child(6) {
    background: linear-gradient(#444, #444) right 3px center / 1px 12px no-repeat, #fdf0b4;
}

.grid.far tbody td:first-child {
    color: #1f8f2d;
}

.chain .far tr > :last-child {
    border-right: 1px solid #ccd1e0;
}

.scroll {
    display: flex;
    flex-direction: column;
    align-items: center;
    width: 14px;
    flex: none;
    border-top: 18px solid #f7f9fd;
    padding: 5px 0;
    background-color: #cfd6e5;
}

.up, .down {
    border: 3px solid transparent;
}

.up {
    border-bottom-color: #5a6b88;
    border-top: none;
}

.down {
    margin-top: auto;
    border-top-color: #5a6b88;
    border-bottom: none;
}

.thumb {
    width: 9px;
    height: 15px;
    margin-top: 6px;
    background-color: #9da9ba;
}

.chain-puts .thumb {
    margin-top: 82px;
}

/* position summary */
.summary-bar {
    display: flex;
    align-items: center;
    gap: 7px;
    height: 21px;
    background-color: #cfd6e5;
}

.ignore {
    display: flex;
    align-items: center;
    gap: 3px;
    margin-left: auto;
    padding-right: 2px;
}

input[type="checkbox"] {
    appearance: none;
    display: inline-block;
    position: relative;
    width: 9px;
    height: 9px;
    background-color: #fff;
    border: 1px solid #aab6c8;
}

input[type="checkbox"]:checked::after {
    content: "";
    position: absolute;
    left: 2px;
    top: 0;
    width: 2px;
    height: 4px;
    border: solid #5a6b88;
    border-width: 0 1px 1px 0;
    transform: rotate(40deg);
}

.summary-wrap {
    padding-left: 1px;
    background-color: #f7f9fd;
}

.summary {
    border: 1px solid #aab6c8;
}

.summary .plot {
    width: 60px;
}

.summary td {
    height: 16px;
}

.grid .tick {
    padding: 0;
    text-align: center;
    line-height: 9px;
}

/* chart panel */
.right {
    display: flex;
    flex-direction: column;
    min-width: 0;
    overflow: hidden;
    border-left: 1px solid #aab6c8;
}

.tabs {
    display: flex;
    height: 24px;
    flex: none;
    border-top: 1px solid #c3cbda;
    border-bottom: 1px solid #aab6c8;
}

.tab {
    padding: 0 7px;
    background-color: #cfd6e5;
    border-right: 1px solid #aab6c8;
}

.tab.active {
    padding-left: 8px;
    background-color: #d6dbe9;
    margin-bottom: -1px;
}

.chart-bar {
    display: flex;
    align-items: center;
    gap: 4px;
    height: 21px;
    flex: none;
    padding-left: 4px;
}

.spin {
    position: relative;
    display: flex;
    width: 46px;
    height: 17px;
    background-color: #fff;
    border: 1px solid #b9c4d6;
}

.spin input {
    width: 100%;
    padding-right: 16px;
    text-align: right;
}

.spin .up,
.spin .down {
    position: absolute;
    right: 4px;
    top: 3px;
}

.spin .down {
    top: 10px;
    margin: 0;
}

.projection-label {
    margin-left: auto;
}

.projection {
    width: 60px;
    height: 17px;
    margin-right: -15px;
    padding-left: 2px;
    background-color: #fff;
    border: 1px solid #b9c4d6;
}

.chart-area {
    flex: 1;
    min-height: 0;
    background-color: #fff;
}

.status {
    display: flex;
    justify-content: flex-end;
    gap: 9px;
    height: 20px;
    flex: none;
    margin-right: -4px;
    background-color: #293955;
    line-height: 20px;
    color: #d6dbe9;
}

.chart {
    width: 100%;
    height: 100%;
    font-family: "Liberation Sans", Arial, sans-serif;
    font-size: 9px;
}

.chart .mid { text-anchor: middle; }
.chart .end { text-anchor: end; }
.chart .axis { fill: #333; }
.chart .grey { fill: #666; }
.chart .blue { fill: #7171f0; }
.chart .pink { fill: #f4676e; }
.chart .leg-forest { fill: #5aa667; }
.chart .leg-lime { fill: #6be07a; }
.chart .strip-name { fill: #6f7780; }
.chart .now-blue { fill: #2a2af0; }
.chart .now-red { fill: #f01828; }
.chart .level { fill: #fff; }
.chart .on-outer { fill: #4f9cc4; }
.chart .on-inner { fill: #8cc4e4; }

.grid-line {
    stroke: #dedede;
    shape-rendering: crispEdges;
}

.zero { stroke: #333; }
.band-outer { fill: #93cddb; }
.band-inner { fill: #4f81bd; }

.curve {
    fill: none;
    stroke-width: 1;
}

.curve.navy { stroke: #3a3ac4; stroke-width: 1.5; }
.curve.forest { stroke: #118511; stroke-width: 1.5; }
.curve.red { stroke: #f45b5b; }
.curve.lime { stroke: #3fe03f; }
.curve.sky { stroke: #8db4f4; }

.expected {
    fill: none;
    stroke: #e09a78;
    stroke-width: 6;
    opacity: .7;
}

.marker { fill: #00f0ff; stroke: #222; }
.move-box { fill: #e8eef6; stroke: #707c8c; }
.level-box { fill: #008a00; }
.panel { fill: #eaf1fa; fill-opacity: .8; stroke: #8090a2; }
.greeks { fill: #e7eff7; stroke: #8090a2; }
.cursor { fill: #e7edf7; fill-opacity: .88; stroke: #6f7f92; }

.bar-blue,
.bar-red {
    fill: #5c7cfa;
    stroke: #666;
    shape-rendering: crispEdges;
}

.bar-red { fill: #f57878; }
.p1 { fill: #a8f0a8; }
.p2 { fill: #5bd65b; }
.p3 { fill: #8cb0ea; }
```
